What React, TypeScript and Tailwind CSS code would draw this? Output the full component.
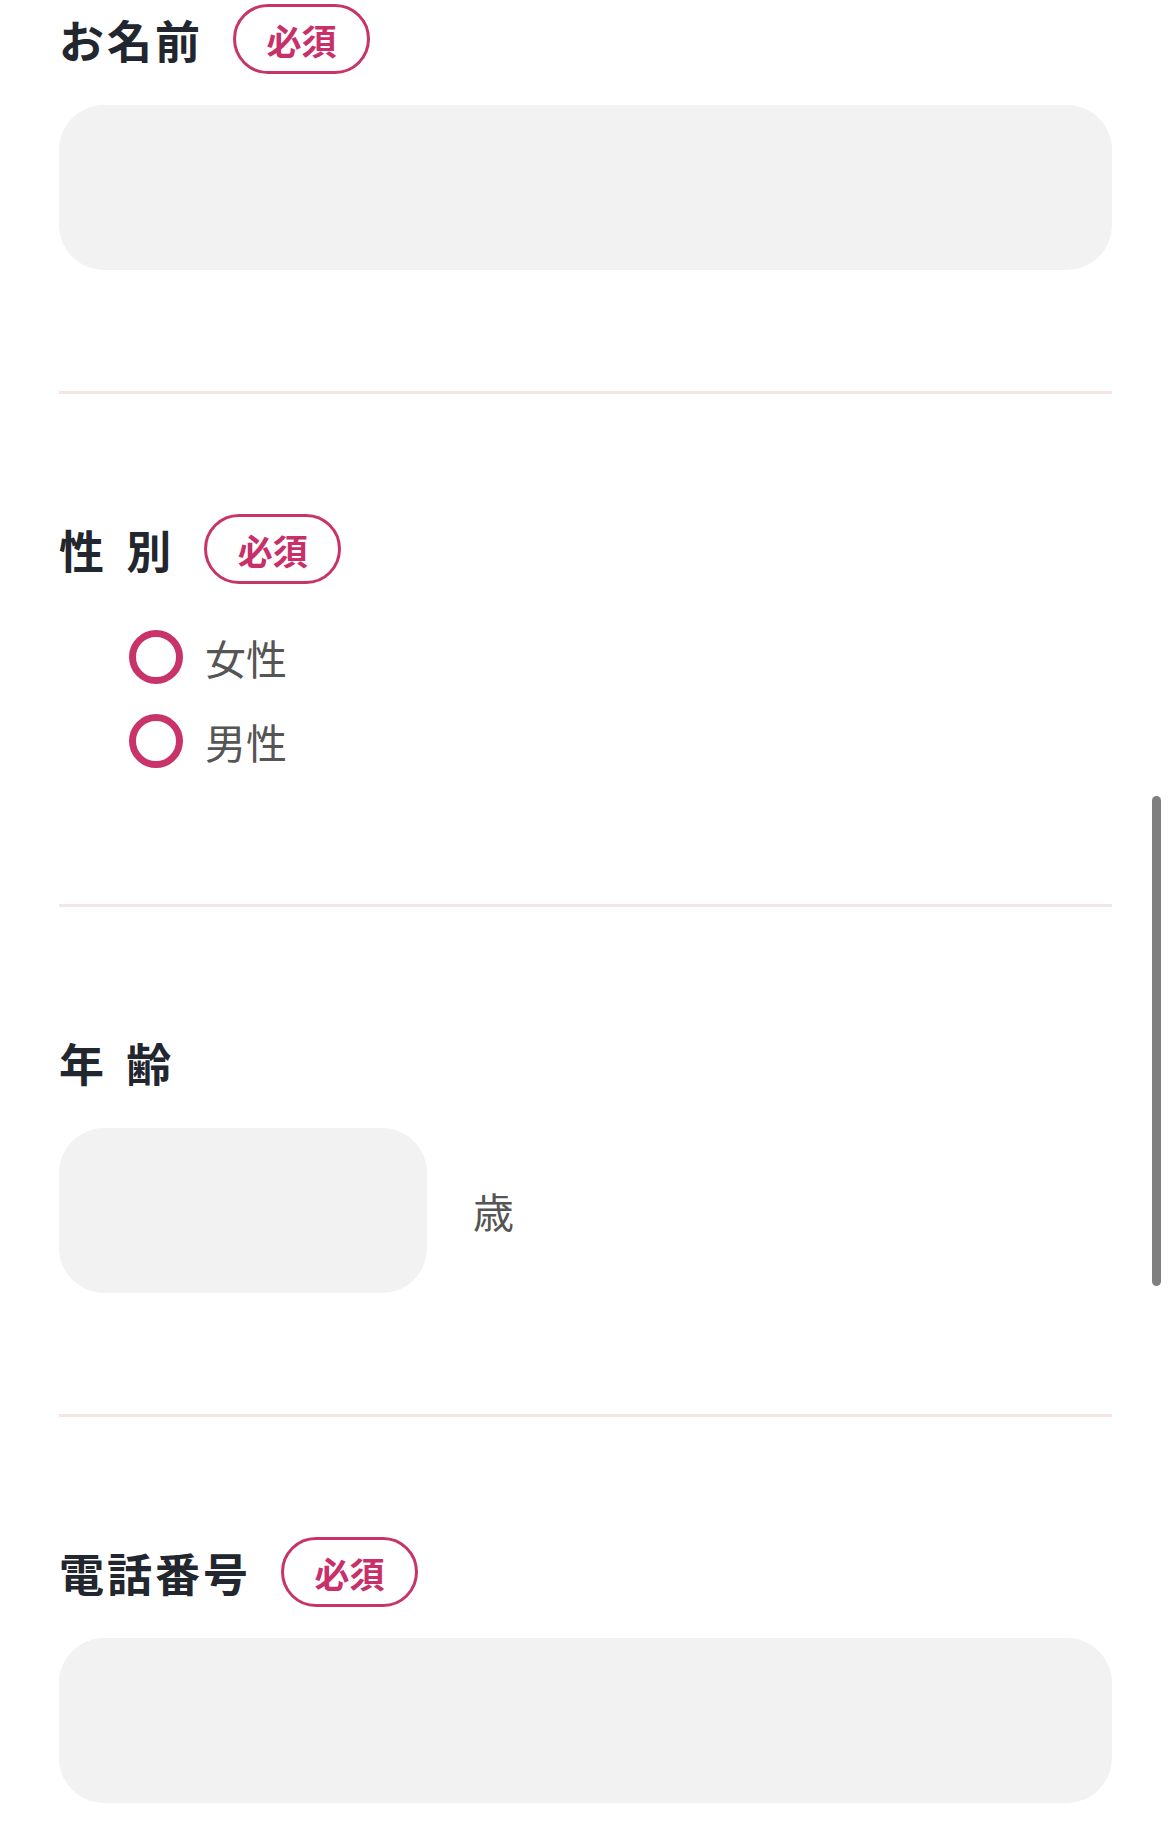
import React from "react";

const font = { fontFamily: '"Noto Sans CJK JP", "Noto Sans", sans-serif' };

function Badge() {
  return (
    <span className="ml-[30px] inline-flex h-[70px] w-[137px] items-center justify-center rounded-full border-[3px] border-[#c8336a] text-[35px] font-bold leading-none text-[#c8306a]">
      必須
    </span>
  );
}

function Label({ text, required }: { text: string; required?: boolean }) {
  return (
    <div className="flex h-[70px] items-center">
      <span className="text-[45px] font-bold leading-none tracking-[3px] text-[#22262e] [word-spacing:6px]">
        {text}
      </span>
      {required && <Badge />}
    </div>
  );
}

function Section({
  children,
  first,
  line = "border-[#f2e5e4]",
}: {
  children: React.ReactNode;
  first?: boolean;
  line?: string;
}) {
  return (
    <section
      className={`flex flex-col gap-[31px] border-b-[3px] pb-[121px] ${line} ${
        first ? "pt-[4px]" : "pt-[120px]"
      }`}
    >
      {children}
    </section>
  );
}

function Field({ className = "w-full" }: { className?: string }) {
  return <div className={`h-[165px] rounded-[45px] bg-[#f2f2f2] ${className}`} />;
}

function Radio({ label }: { label: string }) {
  return (
    <label className="flex h-[84px] items-center pl-[70px]">
      <span className="h-[54px] w-[54px] shrink-0 rounded-full border-[7px] border-[#c8336a]" />
      <span className="ml-[22px] text-[41px] leading-none text-[#555555]">{label}</span>
    </label>
  );
}

export default function App() {
  return (
    <div className="relative min-h-[1822px] bg-white" style={font}>
      <div className="flex flex-col pl-[59px] pr-[58px]">
        <Section first>
          <Label text="お名前" required />
          <Field />
        </Section>

        <Section line="border-[#efe8e6]">
          <Label text="性 別" required />
          <div className="flex flex-col">
            <Radio label="女性" />
            <Radio label="男性" />
          </div>
        </Section>

        <Section>
          <Label text="年 齢" />
          <div className="flex items-center">
            <Field className="w-[368px]" />
            <span className="ml-[46px] text-[41px] leading-none text-[#555555]">歳</span>
          </div>
        </Section>

        <section className="flex flex-col gap-[31px] pt-[120px] pb-[120px]">
          <Label text="電話番号" required />
          <Field />
        </section>
      </div>

      {/* overlay scrollbar */}
      <div className="fixed top-[796px] left-[1152px] h-[490px] w-[9px] rounded-full bg-[#7f7f7f]" />
    </div>
  );
}
